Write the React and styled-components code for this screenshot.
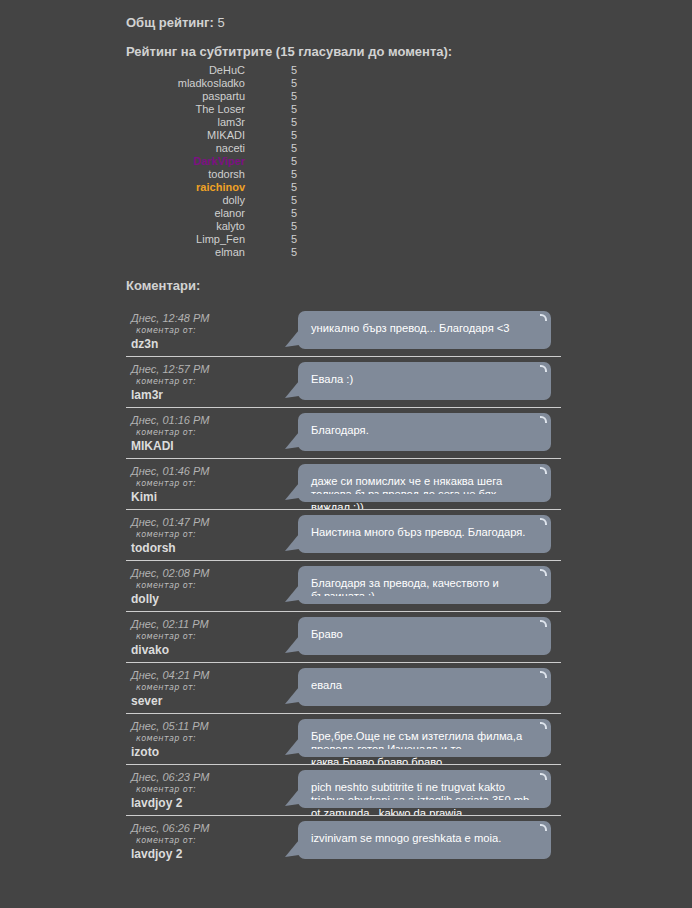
import React from 'react';
import styled, { createGlobalStyle } from 'styled-components';

const GlobalStyle = createGlobalStyle`
  html, body {
    margin: 0;
    padding: 0;
    background: #444444;
  }
  body {
    font-family: "Liberation Sans", Arial, sans-serif;
    color: #cfcfcf;
  }
`;

const Page = styled.div`
  padding: 15px 0 40px 126px;
  width: 435px;
`;

const Heading = styled.div`
  font-size: 13px;
  font-weight: bold;
  line-height: 15px;
  color: #d2d2d2;
  margin-top: ${({ gap }) => gap || 0}px;
`;

const Plain = styled.span`
  font-weight: normal;
`;

const RatingTable = styled.div`
  display: grid;
  grid-template-columns: 119px 40px;
  column-gap: 46px;
  margin-top: 5px;
  font-size: 11px;
  line-height: 13px;
`;

const RaterName = styled.div`
  text-align: right;
  color: ${({ color }) => color || '#d0d0d0'};
  font-weight: ${({ color }) => (color ? 'bold' : 'normal')};
`;

const RaterScore = styled.div`
  color: #d0d0d0;
`;

const CommentList = styled.div`
  margin-top: 13px;
`;

const CommentRow = styled.div`
  display: flex;
  height: 45px;
  padding: 5px 0 0 5px;
  border-bottom: 1px solid #cdcdcd;
  overflow: hidden;

  &:last-child {
    border-bottom: none;
  }
`;

const Meta = styled.div`
  width: 167px;
  flex-shrink: 0;
  padding-top: 1px;
`;

const Stamp = styled.div`
  font-size: 11px;
  font-style: italic;
  line-height: 13px;
  color: #b2b2b2;
`;

const ByLabel = styled.div`
  font-family: "DejaVu Sans", Verdana, sans-serif;
  font-size: 8px;
  font-style: italic;
  letter-spacing: 0.4px;
  line-height: 12px;
  margin-left: 5px;
  color: #bdbdbd;
`;

const Author = styled.div`
  font-size: 12px;
  font-weight: bold;
  line-height: 14px;
  color: #dcdcdc;
`;

const Bubble = styled.div`
  position: relative;
  width: 253px;
  flex-shrink: 0;

  &::before {
    content: '';
    position: absolute;
    left: -13px;
    top: 19px;
    width: 14px;
    height: 17px;
    background: #808a99;
    clip-path: polygon(100% 0, 0 100%, 100% 88%);
  }
`;

const CapTop = styled.div`
  position: relative;
  height: 8px;
  background: #808a99;
  border-radius: 7px 7px 0 0;

  &::after {
    content: '';
    position: absolute;
    right: 4px;
    top: 3px;
    width: 5px;
    height: 5px;
    border-top: 2px solid rgba(232, 238, 246, 0.9);
    border-right: 2px solid rgba(232, 238, 246, 0.9);
    border-top-right-radius: 6px;
  }
`;

const BubbleText = styled.div`
  height: 19px;
  padding: 3px 10px 0 13px;
  background: #808a99;
  font-size: 11.2px;
  line-height: 13px;
  color: #ffffff;
  white-space: pre-line;
`;

const CapBottom = styled.div`
  position: relative;
  height: 8px;
  background: #808a99;
  border-radius: 0 0 7px 7px;
`;

const raters = [
  { name: 'DeHuC' },
  { name: 'mladkosladko' },
  { name: 'paspartu' },
  { name: 'The Loser' },
  { name: 'lam3r' },
  { name: 'MIKADI' },
  { name: 'naceti' },
  { name: 'DarkViper', color: '#7d1183' },
  { name: 'todorsh' },
  { name: 'raichinov', color: '#f0a224' },
  { name: 'dolly' },
  { name: 'elanor' },
  { name: 'kalyto' },
  { name: 'Limp_Fen' },
  { name: 'elman' },
];

const comments = [
  { time: '12:48 PM', author: 'dz3n', text: 'уникално бърз превод... Благодаря <3' },
  { time: '12:57 PM', author: 'lam3r', text: 'Евала :)' },
  { time: '01:16 PM', author: 'MIKADI', text: 'Благодаря.' },
  { time: '01:46 PM', author: 'Kimi', text: 'даже си помислих че е някаква шега\nтолкова бърз превод до сега не бях\nвиждал :))' },
  { time: '01:47 PM', author: 'todorsh', text: 'Наистина много бърз превод. Благодаря.' },
  { time: '02:08 PM', author: 'dolly', text: 'Благодаря за превода, качеството и\nбързината :)' },
  { time: '02:11 PM', author: 'divako', text: 'Браво' },
  { time: '04:21 PM', author: 'sever', text: 'евала' },
  { time: '05:11 PM', author: 'izoto', text: 'Бре,бре.Още не съм изтеглила филма,а\nпревода готов.Изненада и то\nкаква.Браво,браво,браво.' },
  { time: '06:23 PM', author: 'lavdjoy 2', text: 'pich neshto subtitrite ti ne trugvat kakto\ntriabva obyrkani sa a iztoglih seriata 350 mb\not zamunda.. kakwo da prawia' },
  { time: '06:26 PM', author: 'lavdjoy 2', text: 'izvinivam se mnogo greshkata e moia.' },
];

export default function App() {
  return (
    <>
      <GlobalStyle />
      <Page>
        <Heading>Общ рейтинг: <Plain>5</Plain></Heading>
        <Heading gap={14}>Рейтинг на субтитрите (15 гласували до момента):</Heading>
        <RatingTable>
          {raters.map(r => (
            <React.Fragment key={r.name}>
              <RaterName color={r.color}>{r.name}</RaterName>
              <RaterScore>5</RaterScore>
            </React.Fragment>
          ))}
        </RatingTable>
        <Heading gap={19}>Коментари:</Heading>
        <CommentList>
          {comments.map((c, i) => (
            <CommentRow key={i}>
              <Meta>
                <Stamp>Днес, {c.time}</Stamp>
                <ByLabel>коментар от:</ByLabel>
                <Author>{c.author}</Author>
              </Meta>
              <Bubble>
                <CapTop />
                <BubbleText>{c.text}</BubbleText>
                <CapBottom />
              </Bubble>
            </CommentRow>
          ))}
        </CommentList>
      </Page>
    </>
  );
}
